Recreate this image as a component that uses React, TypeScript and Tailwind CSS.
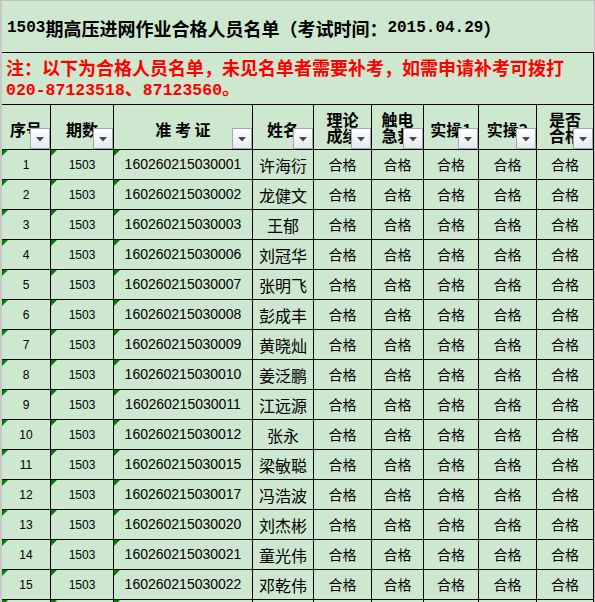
import React from 'react';

const cjk = "font-['Noto_Sans_CJK_SC',sans-serif]";
const mono = "font-['Liberation_Mono','Noto_Sans_CJK_SC',monospace]";
const num = "font-['Liberation_Sans','Noto_Sans_CJK_SC',sans-serif]";

const rows: [number, string, string][] = [
  [1, '160260215030001', '许海衍'],
  [2, '160260215030002', '龙健文'],
  [3, '160260215030003', '王郁'],
  [4, '160260215030006', '刘冠华'],
  [5, '160260215030007', '张明飞'],
  [6, '160260215030008', '彭成丰'],
  [7, '160260215030009', '黄晓灿'],
  [8, '160260215030010', '姜泛鹏'],
  [9, '160260215030011', '江远源'],
  [10, '160260215030012', '张永'],
  [11, '160260215030015', '梁敏聪'],
  [12, '160260215030017', '冯浩波'],
  [13, '160260215030020', '刘杰彬'],
  [14, '160260215030021', '童光伟'],
  [15, '160260215030022', '邓乾伟'],
];

const headers: string[][] = [
  ['序号'],
  ['期数'],
  ['准 考 证'],
  ['姓名'],
  ['理论', '成绩'],
  ['触电', '急救'],
  ['实操1'],
  ['实操2'],
  ['是否', '合格'],
];

const cols = 'grid grid-cols-[49px_63px_139px_61px_58px_52px_55px_58px_57px]';

const FilterButton = () => (
  <div className="absolute right-0 bottom-0 w-[20px] h-[21px] border border-[#a3aab5] bg-gradient-to-b from-white to-[#e6e9ee] flex items-center justify-center">
    <svg width="8" height="5" viewBox="0 0 8 5" className="mt-[2px]">
      <path d="M0 0H8L4 4.5Z" fill="#4a4a4a" />
    </svg>
  </div>
);

const Flag = () => (
  <div className="absolute left-0 top-0 w-0 h-0 border-t-[6px] border-r-[6px] border-t-[#008000] border-r-transparent" />
);

export default function App() {
  return (
    <div className="w-[595px] h-[602px] overflow-hidden bg-[#cde8ce] flex flex-col">
      <div className="h-px bg-[#c0c0c0] shrink-0" />
      <div className="flex flex-1 min-h-0">
        <div className="w-[2px] bg-[#c8c8c8] shrink-0" />
        <div className="w-[592px] shrink-0 flex flex-col">
          {/* title */}
          <div className={`h-[52px] shrink-0 border-b border-black flex items-center pl-[5px] pt-[3px] font-bold text-black text-[18px] ${cjk}`}>
            <span className={`${mono} text-[16px]`}>1503</span>
            <span>期高压进网作业合格人员名单（考试时间：</span>
            <span className={`${mono} text-[16px]`}>2015.04.29</span>
            <span>）</span>
          </div>
          {/* note */}
          <div className={`h-[52px] shrink-0 border-b border-r border-black flex items-center pl-[4px] font-bold text-[#ff0000] text-[18px] leading-[20px] ${cjk}`}>
            <div>
              注：以下为合格人员名单，未见名单者需要补考，如需申请补考可拨打
              <br />
              <span className={`${mono} text-[16.5px]`}>020-87123518</span>、
              <span className={`${mono} text-[16.5px]`}>87123560</span>。
            </div>
          </div>
          {/* header */}
          <div className={`${cols} h-[45px] shrink-0 border-b border-black`}>
            {headers.map((h, i) => (
              <div
                key={i}
                className={`relative border-r border-black flex items-center justify-center text-center font-bold text-[16px] leading-[16px] text-black ${cjk} ${h.length === 1 ? 'pt-[4px]' : ''}`}
              >
                <div>
                  {h.map((line, j) => (
                    <div key={j} className="whitespace-pre">{line}</div>
                  ))}
                </div>
                <FilterButton />
              </div>
            ))}
          </div>
          {/* rows */}
          {rows.map(([n, id, name]) => (
            <div key={n} className={`${cols} h-[30px] shrink-0 border-b border-black text-black`}>
              <div className={`relative border-r border-black flex items-center justify-center text-[12px] ${num}`}>
                <Flag />
                {n}
              </div>
              <div className={`relative border-r border-black flex items-center justify-center text-[12px] ${num}`}>
                <Flag />
                1503
              </div>
              <div className={`relative border-r border-black flex items-center justify-center text-[14px] ${num}`}>
                <Flag />
                {id}
              </div>
              <div className={`border-r border-black flex items-center justify-center text-[16px] ${cjk}`}>
                {name}
              </div>
              {[0, 1, 2, 3, 4].map((k) => (
                <div key={k} className={`border-r border-black flex items-center justify-center text-[14px] ${cjk}`}>
                  合格
                </div>
              ))}
            </div>
          ))}
          {/* next row, only its top edge shows */}
          <div className={`${cols} h-[30px] shrink-0`}>
            {[0, 1, 2, 3, 4, 5, 6, 7, 8].map((k) => (
              <div key={k} className="relative border-r border-black">
                {k < 3 && <Flag />}
              </div>
            ))}
          </div>
        </div>
        <div className="w-px bg-[#c0c0c0] shrink-0" />
      </div>
    </div>
  );
}
